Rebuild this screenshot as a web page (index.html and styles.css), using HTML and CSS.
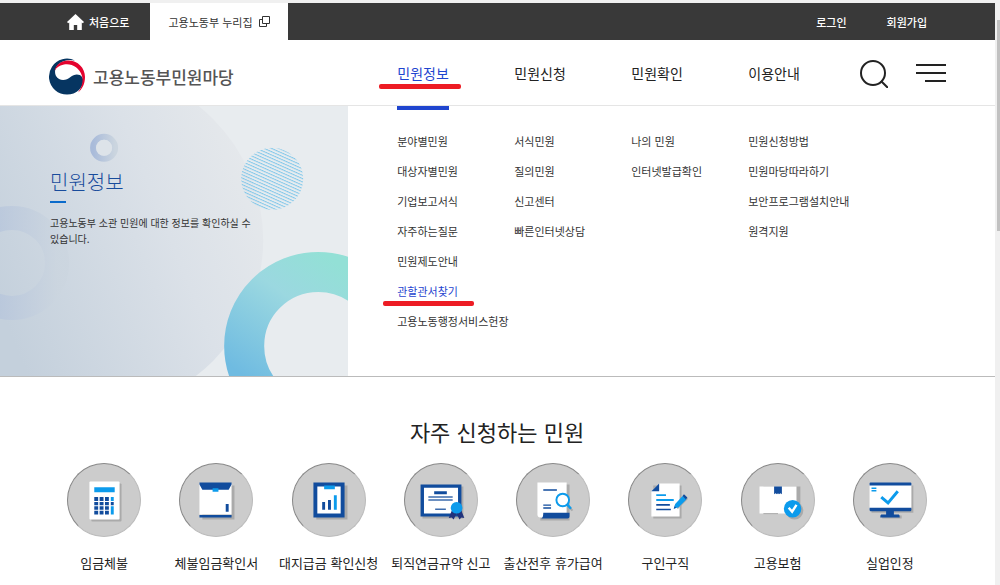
FILE: index.html
```html
<!DOCTYPE html>
<html lang="ko">
<head>
    <meta charset="UTF-8">
    <meta name="viewport" content="width=device-width, initial-scale=1.0">
    <title>고용노동부민원마당</title>
    <link rel="stylesheet" href="styles.css">
</head>
<body>
    <div class="page">
        <div class="topbar">
            <a class="home" href="#">
                <svg width="17" height="16" viewBox="0 0 17 16"><path d="M8.500 0L17 8l-1.200 1.200-1-.8V16h-4.600v-5H6.800v5H2.200V8.400l-1 .8L0 8z" fill="#fff"/></svg>
                처음으로
            </a>
            <a class="site-tab" href="#">
                고용노동부 누리집
                <svg width="11" height="11" viewBox="0 0 11 11" fill="none" stroke="#333"><path d="M3.500 .5h7v7h-7zM3.500 3.500h-3v7h7v-3"/></svg>
            </a>
            <div class="account">
                <a href="#">로그인</a>
                <a href="#">회원가입</a>
            </div>
        </div>

        <header class="header">
            <a class="logo" href="#">
                <svg width="37" height="37" viewBox="0 0 37 37">
                    <path d="M27 2.500A18 18 0 1 0 31 32C35 28 36.500 22 34 19C31.500 15.500 26 16 22.500 19C18 23 11 23 8 18C5 12 9 4 19 2.200Q23 1.500 27 2.500z" fill="#063561"/>
                    <path d="M6.500 13C8 6 14 2.500 20 2.500C30 2.500 37 10 37 19C37 26 34 31.500 30 34.500C34 29 35.500 23 34 18C31.500 9 23 5 16 6.500C11 7.500 8 10 6.500 13z" fill="#e4032e"/>
                </svg>
                고용노동부민원마당
            </a>
            <nav class="columns gnb">
                <a class="active marked" href="#">민원정보</a>
                <a href="#">민원신청</a>
                <a href="#">민원확인</a>
                <a href="#">이용안내</a>
            </nav>
            <div class="tools">
                <button type="button" aria-label="검색">
                    <svg width="28" height="28" viewBox="0 0 28 28" fill="none" stroke="#222" stroke-width="2"><circle cx="13" cy="13" r="12"/><path d="M21 21l7 7"/></svg>
                </button>
                <button type="button" aria-label="전체메뉴">
                    <svg width="30" height="28" viewBox="0 0 30 28" fill="none" stroke="#222" stroke-width="2"><path d="M0 5h30M0 13h30M9 21h21"/></svg>
                </button>
            </div>
        </header>

        <section class="mega">
            <div class="intro">
                <svg class="intro-art" viewBox="0 0 348 270" preserveAspectRatio="xMaxYMax slice">
                    <defs>
                        <linearGradient id="disc" x1="0" y1=".7" x2="1" y2=".3">
                            <stop offset=".2" stop-color="#c4d0dc"/>
                            <stop offset=".7" stop-color="#dbe1e8"/>
                            <stop offset="1" stop-color="#e6e9ec"/>
                        </linearGradient>
                        <linearGradient id="ring" x1="0" y1="0" x2="1" y2="0">
                            <stop offset="0" stop-color="#a9bbda"/>
                            <stop offset="1" stop-color="#cbd5df"/>
                        </linearGradient>
                        <linearGradient id="mint" x1="0" y1="1" x2=".7" y2="0">
                            <stop offset=".2" stop-color="#6fbbe1"/>
                            <stop offset=".7" stop-color="#9bd8e0"/>
                            <stop offset="1" stop-color="#93e0d6"/>
                        </linearGradient>
                        <pattern id="lines" width="8" height="3" patternUnits="userSpaceOnUse" patternTransform="rotate(24)">
                            <rect width="8" height="1" fill="#83c8ea"/>
                        </pattern>
                    </defs>
                    <rect width="348" height="270" fill="#e8ecef"/>
                    <circle cx="92" cy="134" r="171" fill="url(#disc)"/>
                    <circle cx="12" cy="157" r="45" fill="none" stroke="url(#ring)" stroke-width="24" opacity=".7"/>
                    <circle cx="104" cy="42" r="11" fill="none" stroke="url(#ring)" stroke-width="6"/>
                    <circle cx="104" cy="42" r="8" fill="#dde3e9"/>
                    <circle cx="272" cy="73" r="31" fill="url(#lines)"/>
                    <circle cx="318" cy="240" r="55" fill="#e8ecef"/>
                    <circle cx="318" cy="240" r="74" fill="none" stroke="url(#mint)" stroke-width="40"/>
                </svg>
                <div class="intro-text">
                    <h2>민원정보</h2>
                    <p>고용노동부 소관 민원에 대한 정보를 확인하실 수 있습니다.</p>
                </div>
            </div>
            <div class="columns submenu">
                <ul class="current">
                    <li><a href="#">분야별민원</a></li>
                    <li><a href="#">대상자별민원</a></li>
                    <li><a href="#">기업보고서식</a></li>
                    <li><a href="#">자주하는질문</a></li>
                    <li><a href="#">민원제도안내</a></li>
                    <li><a class="active marked" href="#">관할관서찾기</a></li>
                    <li><a href="#">고용노동행정서비스헌장</a></li>
                </ul>
                <ul>
                    <li><a href="#">서식민원</a></li>
                    <li><a href="#">질의민원</a></li>
                    <li><a href="#">신고센터</a></li>
                    <li><a href="#">빠른인터넷상담</a></li>
                </ul>
                <ul>
                    <li><a href="#">나의 민원</a></li>
                    <li><a href="#">인터넷발급확인</a></li>
                </ul>
                <ul>
                    <li><a href="#">민원신청방법</a></li>
                    <li><a href="#">민원마당따라하기</a></li>
                    <li><a href="#">보안프로그램설치안내</a></li>
                    <li><a href="#">원격지원</a></li>
                </ul>
            </div>
        </section>

        <main class="favorites">
            <h1>자주 신청하는 민원</h1>
            <div class="services">
                <a href="#">
                    <svg class="icon" viewBox="0 0 74 74">
                        <rect x="24" y="20" width="31" height="39" rx="1" fill="#aaa"/>
                        <rect x="22" y="18" width="31" height="39" rx="1" fill="#fff"/>
                        <path d="M27 24h21v5H27z" fill="#0c9bec"/>
                        <path d="M27 34h4v4h-4zM32.500 34h4v4h-4zM38 34h4v4h-4zM27 39h4v3.500h-4zM32.500 39h4v3.500h-4zM38 39h4v3.500h-4zM44 39h3v3.500h-3zM27 43.500h4v3.500h-4zM32.500 43.500h4v3.500h-4zM38 43.500h4v3.500h-4zM27 48h4v4h-4zM32.500 48h4v4h-4zM38 48h4v4h-4z" fill="#114c9d"/>
                        <path d="M44 34h3v4h-3zM44 43.500h3V52h-3z" fill="#0c9bec"/>
                    </svg>
                    임금체불
                </a>
                <a href="#">
                    <svg class="icon" viewBox="0 0 74 74">
                        <path d="M23 22h33v35H23z" fill="#aaa"/>
                        <path d="M20 20h33v32H20z" fill="#fff"/>
                        <path d="M20 19h33v2l-3 5.500H23L20 21zM20 52.500h33V55H20zM47 41h3v8h-3z" fill="#114c9d"/>
                        <path d="M33.500 25h6v3.500h-6z" fill="#0c9bec"/>
                    </svg>
                    체불임금확인서
                </a>
                <a href="#">
                    <svg class="icon" viewBox="0 0 74 74">
                        <path d="M24 22h32v35H24z" fill="#aaa"/>
                        <path d="M21 19h32v36H21z" fill="#114c9d"/>
                        <path d="M25 23h24v28H25z" fill="#fff"/>
                        <path d="M32 22h11v4H32zM42 32h3v15h-3z" fill="#0c9bec"/>
                        <path d="M30 39h3v8h-3zM36 37h3v10h-3z" fill="#114c9d"/>
                    </svg>
                    대지급금 확인신청
                </a>
                <a href="#">
                    <svg class="icon" viewBox="0 0 74 74">
                        <path d="M18 23h42v33H18z" fill="#aaa"/>
                        <path d="M16 21h42v33H16z" fill="#114c9d"/>
                        <path d="M19.500 24.500h35v26.500h-35z" fill="#fff"/>
                        <path d="M30 28h13v3H30z" fill="#114c9d"/>
                        <path d="M24 34h25M24 37h25M31 46.500h11" stroke="#3d6cad" stroke-width="1.500"/>
                        <path d="M48 48l-3 7.500 3-.5 2 2 3-6 3 6 2-2 3 .5-3-7.500z" fill="#21337c"/>
                        <circle cx="53" cy="45" r="6" fill="#0c9bec"/>
                    </svg>
                    퇴직연금규약 신고
                </a>
                <a href="#">
                    <svg class="icon" viewBox="0 0 74 74">
                        <path d="M24 21h30v37H24z" fill="#aaa"/>
                        <path d="M21 19h30v36H24a3 3 0 0 1-3-3z" fill="#fff"/>
                        <path d="M27 50h27v4q0 2-2 2H25q2-1 2-6zM27 26h14v1.500H27zM27 41.500h8V43h-8zM27 44.500h8V46h-8z" fill="#114c9d"/>
                        <path d="M52 42.500l5 5.500" stroke="#aaa" stroke-width="2"/>
                        <circle cx="47" cy="37" r="6.500" fill="#fff" stroke="#0c9bec" stroke-width="2"/>
                        <path d="M51.500 41.500l4 4.500" stroke="#0c9bec" stroke-width="2.500"/>
                    </svg>
                    출산전후 휴가급여
                </a>
                <a href="#">
                    <svg class="icon" viewBox="0 0 74 74">
                        <path d="M25 22h29v34H25z" fill="#aaa"/>
                        <path d="M31 20h21v34H23V28z" fill="#fff"/>
                        <path d="M31 20v8h-8zM28 41h14v2H28zM28 46h15v1.500H28z" fill="#114c9d"/>
                        <path d="M28 31h10v2H28zM28 36h18v2H28z" fill="#0c9bec"/>
                        <path d="M48.500 44.500L59 34" stroke="#aaa" stroke-width="5"/>
                        <path d="M46 46l1.500-5L55 33l4 3.500-8 8z" fill="#0c9bec"/>
                        <path d="M55 33l1.500-2 3.500 3.500-1.500 2zM46 46l.8-2.500 1.700 1.500z" fill="#114c9d"/>
                    </svg>
                    구인구직
                </a>
                <a href="#">
                    <svg class="icon" viewBox="0 0 74 74">
                        <path d="M22 23h38v27H22z" fill="#aaa"/>
                        <circle cx="54" cy="48" r="9" fill="#aaa"/>
                        <path d="M18 23h38v28H18z" fill="#fff"/>
                        <path d="M22 51h15" stroke="#aaa"/>
                        <path d="M33 23h8v8l-1.500-1-1.500 1-1-1-1 1-1.500-1-1.500 1z" fill="#114c9d"/>
                        <circle cx="52" cy="46" r="9" fill="#0c9bec"/>
                        <path d="M48 45l3.500 4 4.500-7" fill="none" stroke="#fff" stroke-width="2.500"/>
                    </svg>
                    고용보험
                </a>
                <a href="#">
                    <svg class="icon" viewBox="0 0 74 74">
                        <path d="M18 22h43v28H18zM29 53h20v3H29z" fill="#aaa"/>
                        <path d="M16 21h43v25H16z" fill="#fff"/>
                        <path d="M16 20q0-1 1-1h41q1 0 1 1v2H16zM16 45h43v2q0 1.500-1 1.500H41V52h5q1 0 1 3H27q0-3 1-3h5v-3.500H17q-1 0-1-1.500z" fill="#114c9d"/>
                        <path d="M18 25h5M18 27.500h5" stroke="#0c9bec" stroke-width="1.500"/>
                        <path d="M28 34l7 6 10-12" fill="none" stroke="#0c9bec" stroke-width="3"/>
                    </svg>
                    실업인정
                </a>
            </div>
        </main>
    </div>
    <div class="scrollbar"><div class="thumb"></div></div>
</body>
</html>
```
FILE: styles.css
```css
* {
    box-sizing: border-box;
}
body {
    margin: 0;
    display: flex;
    min-height: 100vh;
    background: white;
    color: #333;
    font-family: "Noto Sans CJK KR", "Noto Sans", sans-serif;
    font-size: 11px;
    line-height: 16px;
}
a {
    color: inherit;
    text-decoration: none;
    white-space: nowrap;
}
svg {
    display: block;
    flex: none;
}
h1, h2, p, ul {
    margin: 0;
    padding: 0;
}
ul {
    list-style: none;
}
.page {
    flex: 1;
    min-width: 0;
    border-top: 3px solid #f0f0f0;
}

/* dark bar */
.topbar {
    display: flex;
    height: 37px;
    padding: 0 68px 0 67px;
    background: #393939;
    color: white;
}
.topbar a {
    display: flex;
    align-items: center;
}
.home {
    gap: 5px;
    padding-right: 21px;
    font-weight: 500;
}
.site-tab {
    gap: 6px;
    padding: 0 18px;
    background: white;
    color: #333;
}
.account {
    display: flex;
    gap: 40px;
    margin-left: auto;
    font-weight: 500;
}

/* logo and main menu */
.header {
    display: flex;
    align-items: center;
    height: 66px;
    border-bottom: 1px solid #e5e5e5;
}
.logo {
    display: flex;
    flex: 0 0 35%;
    align-items: center;
    gap: 8px;
    padding: 8px 0 0 48px;
    color: #555;
    font-size: 17px;
    font-weight: 500;
}
.columns {
    display: grid;
    grid-template-columns: repeat(3, 117px) auto;
    padding-left: 49px;
}
.gnb {
    color: #222;
    font-size: 14px;
    line-height: 20px;
}
.gnb a {
    justify-self: start;
}
.tools {
    display: flex;
    gap: 28px;
    margin-left: auto;
    padding: 2px 49px 0 0;
}
.tools button {
    padding: 0;
    border: 0;
    background: none;
    cursor: pointer;
}
.active {
    color: #1f45cf;
}

/* red pen marks under the two steps to follow */
.marked {
    position: relative;
}
.marked::after {
    content: "";
    position: absolute;
    left: -18px;
    right: -12px;
    bottom: -6px;
    height: 5px;
    border-radius: 2px;
    background: #ed1c24;
}

/* open menu */
.mega {
    display: grid;
    grid-template-columns: 35% 1fr;
    border-bottom: 1px solid #bbb;
}
.intro {
    position: relative;
    overflow: hidden;
}
.intro-art {
    position: absolute;
    width: 100%;
    height: 100%;
}
.intro-text {
    position: relative;
    padding: 60px 90px 0 50px;
}
.intro h2 {
    margin-bottom: 12px;
    color: #184c9c;
    font-size: 20px;
    font-weight: 300;
    line-height: 32px;
}
.intro h2::after {
    content: "";
    display: block;
    width: 16px;
    margin-top: 3px;
    border-top: 2px solid #0b6bcb;
}
.intro p {
    font-size: 10px;
    word-break: keep-all;
}
.submenu ul {
    padding: 20px 0 40px;
}
.submenu .current {
    position: relative;
}
.submenu .current::before {
    content: "";
    position: absolute;
    top: 0;
    width: 52px;
    height: 4px;
    background: #1f45cf;
}
.submenu li {
    height: 30px;
    line-height: 30px;
}
.submenu a {
    display: inline-block;
}
.submenu .marked::after {
    left: -14px;
    right: -16px;
    bottom: 0;
}

/* service shortcuts */
.favorites {
    padding: 38px 49px 10px 48px;
}
.favorites h1 {
    margin-bottom: 16px;
    color: #222;
    font-size: 22px;
    font-weight: 400;
    line-height: 32px;
    text-align: center;
}
.services {
    display: grid;
    grid-template-columns: repeat(8, 1fr);
    color: #222;
    font-size: 13px;
    line-height: 20px;
}
.services a {
    display: flex;
    flex-direction: column;
    align-items: center;
    gap: 16px;
}
.icon {
    width: 74px;
    height: 74px;
    border: 1px solid #bbb;
    border-top-color: #888;
    border-left-color: #888;
    border-radius: 50%;
    background: #ccc;
}

.scrollbar {
    width: 5px;
    padding: 20px 0 0 2px;
    background: #f0f0f0;
}
.thumb {
    height: 211px;
    background: #c1c1c1;
}
```
